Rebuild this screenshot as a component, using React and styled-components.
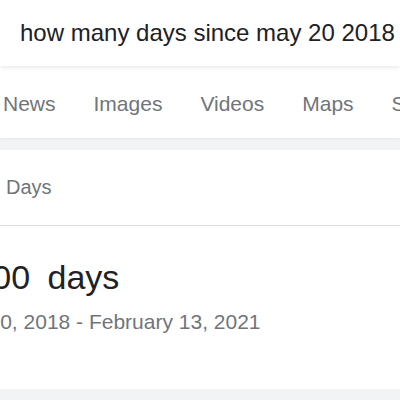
import * as React from 'react';
import styled, { createGlobalStyle } from 'styled-components';

const GlobalStyle = createGlobalStyle`
  html, body {
    margin: 0;
    padding: 0;
    background: #f1f3f4;
    overflow: hidden;
  }
  body {
    font-family: "Liberation Sans", Arial, sans-serif;
    -webkit-font-smoothing: antialiased;
  }
`;

const Page = styled.div`
  width: 400px;
  height: 400px;
  overflow: hidden;
  display: flex;
  flex-direction: column;
`;

const SearchBar = styled.header`
  height: 66px;
  flex-shrink: 0;
  display: flex;
  align-items: center;
  padding-left: 20px;
  background: #fff;
  position: relative;
  z-index: 2;
  box-shadow: 0 2px 4px rgba(0, 0, 0, 0.08);
`;

const Query = styled.span`
  font-size: 24px;
  color: #202124;
  white-space: nowrap;
`;

const Tabs = styled.nav`
  height: 72px;
  flex-shrink: 0;
  display: flex;
  align-items: center;
  gap: 38px;
  padding: 4px 0 0 3px;
  box-sizing: border-box;
  background: #fff;
  box-shadow: 0 1px 2px rgba(0, 0, 0, 0.06);
  white-space: nowrap;
`;

const Tab = styled.span`
  font-size: 21px;
  color: #70757a;
`;

const Card = styled.section`
  margin-top: 12px;
  background: #fff;
  display: flex;
  flex-direction: column;
  height: 239px;
  flex-shrink: 0;
`;

const CardHeader = styled.div`
  height: 75px;
  display: flex;
  align-items: center;
  padding-left: 6px;
  border-bottom: 1px solid #dadce0;
  font-size: 20px;
  color: #70757a;
`;

const CardBody = styled.div`
  padding-top: 31px;
  display: flex;
  flex-direction: column;
  white-space: nowrap;
`;

const Result = styled.div`
  font-size: 34px;
  line-height: 41px;
  word-spacing: 8px;
  color: #202124;
  margin-left: -55px;
`;

const Range = styled.div`
  margin-top: 12px;
  font-size: 21px;
  line-height: 24px;
  color: #70757a;
  margin-left: -57px;
`;

export default function App() {
  return (
    <Page>
      <GlobalStyle />
      <SearchBar>
        <Query>how many days since may 20 2018</Query>
      </SearchBar>
      <Tabs>
        <Tab>News</Tab>
        <Tab>Images</Tab>
        <Tab>Videos</Tab>
        <Tab>Maps</Tab>
        <Tab>Shopping</Tab>
      </Tabs>
      <Card>
        <CardHeader>Days</CardHeader>
        <CardBody>
          <Result>1,000 days</Result>
          <Range>May 20, 2018 - February 13, 2021</Range>
        </CardBody>
      </Card>
    </Page>
  );
}
